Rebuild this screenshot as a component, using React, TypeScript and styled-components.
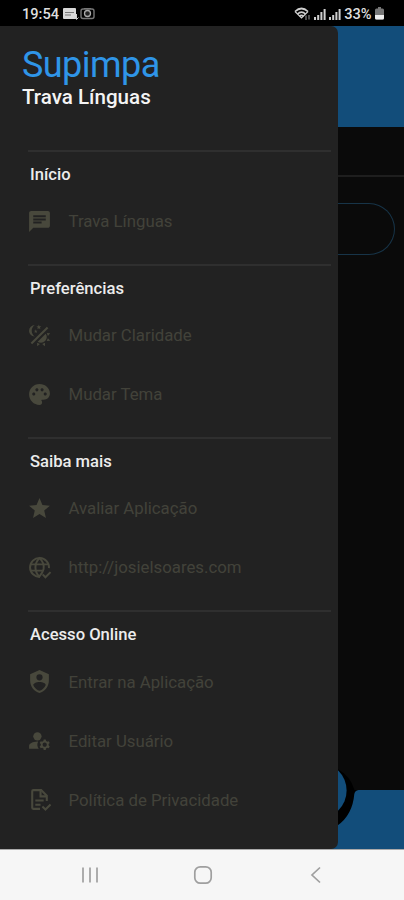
import React from 'react';
import styled, { createGlobalStyle } from 'styled-components';
import { MdChat, MdPalette, MdStar, MdManageAccounts } from 'react-icons/md';

const GlobalStyle = createGlobalStyle`
  * { box-sizing: border-box; }
  body { margin: 0; background: #000; font-family: Roboto, "Liberation Sans", sans-serif; }
`;

const Screen = styled.div`
  width: 404px;
  height: 900px;
  display: flex;
  flex-direction: column;
  overflow: hidden;
  background: #000;
`;

const StatusBar = styled.header`
  height: 26px;
  flex: none;
  display: flex;
  align-items: center;
  justify-content: space-between;
  padding: 1px 20.5px 0 22px;
  color: #dedede;
  font-size: 14.6px;
  font-weight: 500;
`;

const StatusGroup = styled.div<{ $gap: number }>`
  display: flex;
  align-items: center;
  gap: ${(p) => p.$gap}px;
  white-space: nowrap;
`;

const Body = styled.div`
  height: 823px;
  flex: none;
  display: flex;
  background: #0a0a0a;
`;

const Drawer = styled.nav`
  width: 337.5px;
  flex: none;
  height: 823px;
  background: #222;
  border-radius: 0 7px 7px 0;
  padding: 20px 7px 0 28px;
  position: relative;
  z-index: 1;
`;

const Brand = styled.div`
  height: 103.5px;
  margin-left: -6px;
`;

const Title = styled.h1`
  margin: 0;
  font-size: 36px;
  font-weight: 400;
  line-height: 38px;
  letter-spacing: -0.55px;
  color: #2f95e8;
`;

const Subtitle = styled.h2`
  margin: 0;
  font-size: 20.6px;
  font-weight: 500;
  line-height: 27px;
  color: #f4f4f4;
`;

const Section = styled.section`
  border-top: 2px solid #2f2f2f;
  padding-bottom: 13.2px;
`;

const SectionTitle = styled.h3`
  margin: 0 0 0 2px;
  height: 40px;
  padding-top: 6px;
  line-height: 34px;
  font-size: 16.6px;
  font-weight: 500;
  color: #ececec;
`;

const Item = styled.a`
  height: 59px;
  display: flex;
  align-items: center;
  gap: 17px;
  margin-left: -1.5px;
  color: #48483c;
  font-size: 16.8px;
  white-space: nowrap;

  svg { width: 25px; height: 25px; flex: none; fill: currentColor; }
`;

const Label = styled.span`
  color: #42423a;
`;

const Page = styled.main`
  flex: 1;
  margin-left: -10px;
  display: flex;
  flex-direction: column;
`;

const AppBar = styled.div`
  height: 101px;
  background: #124d7a;
`;

const Strip = styled.div`
  height: 50px;
  border-bottom: 2px solid #1e1e1e;
`;

const SearchField = styled.div`
  height: 52px;
  margin: 26px 9px 0 0;
  border: 1px solid #173448;
  border-left: 0;
  border-radius: 0 26px 26px 0;
`;

const BottomBar = styled.svg`
  display: block;
  margin-top: auto;
  width: 76.5px;
  height: 83px;
`;

const NavBar = styled.footer`
  flex: 1;
  background: #f6f6f6;
  border-top: 1px solid #aaa;
  display: grid;
  grid-template-columns: repeat(3, 113px);
  padding-left: 33px;
  align-items: center;
  justify-items: center;

  svg { fill: none; stroke: #9f9f9f; stroke-width: 1.7; }
`;

const FilledIcon = ({ d }: { d: string }) => (
  <svg viewBox="0 0 24 24"><path fillRule="evenodd" d={d} /></svg>
);

const themeIcon = 'M7.5,2C5.71,3.15 4.5,5.18 4.5,7.5C4.5,9.82 5.71,11.85 7.53,13C4.46,13 2,10.54 2,7.5A5.5,5.5 0 0,1 7.5,2M19.07,3.5L20.5,4.93L4.93,20.5L3.5,19.07L19.07,3.5M12.89,5.93L11.41,5L9.97,6L10.39,4.3L9,3.24L10.75,3.12L11.33,1.47L12,3.1L13.73,3.13L12.38,4.26L12.89,5.93M9.59,9.54L8.43,8.81L7.31,9.59L7.65,8.27L6.56,7.44L7.92,7.35L8.37,6.06L8.88,7.33L10.24,7.36L9.19,8.23L9.59,9.54M19,13.5A5.5,5.5 0 0,1 13.5,19C12.28,19 11.15,18.6 10.24,17.93L17.93,10.24C18.6,11.15 19,12.28 19,13.5M14.6,20.08L17.37,18.93L17.13,22.28L14.6,20.08M18.93,17.38L20.08,14.61L22.28,17.15L18.93,17.38M20.08,12.42L18.94,9.64L22.28,9.88L20.08,12.42M9.63,18.93L12.4,20.08L9.87,22.27L9.63,18.93Z';
const shieldIcon = 'M12,1L3,5V11C3,16.55 6.84,21.74 12,23C17.16,21.74 21,16.55 21,11V5L12,1M12,5A3,3 0 0,1 15,8A3,3 0 0,1 12,11A3,3 0 0,1 9,8A3,3 0 0,1 12,5M17.13,17C15.92,18.85 14.11,20.24 12,20.92C9.89,20.24 8.08,18.85 6.87,17C6.53,16.5 6.24,16 6,15.47C6,13.82 8.71,12.47 12,12.47C15.29,12.47 18,13.79 18,15.47C17.76,16 17.47,16.5 17.13,17Z';

const WebCheck = () => (
  <svg viewBox="0 0 24 24">
    <g fill="none" stroke="currentColor" strokeWidth="1.9">
      <path d="M12.5 21A9.1 9.1 0 1 1 21.1 12.6" />
      <path d="M12 21C6.8 16 6.8 8 12 3C15.2 6 16.6 9.5 15.9 13.4Q15 17 12 20.5" />
      <path d="M3.6 9H20.4M3.6 15H14.5" />
      <path d="M15 18.6L17.7 21.4L22.6 16.4" />
    </g>
  </svg>
);

const DocumentCheck = () => (
  <svg viewBox="0 0 24 24">
    <g fill="none" stroke="currentColor" strokeWidth="2">
      <path d="M12.5 21H6Q5 21 5 20V4Q5 3 6 3H13.6L19 8.4V13.5" />
      <path d="M13 3V9H19M8 13H16M8 17H13" />
      <path d="M14.8 18.8L17.7 21.6L22.6 16.8" />
    </g>
  </svg>
);

const Signal = () => (
  <svg width="12" height="12" viewBox="0 0 12 12" fill="#cfcfcf">
    <path d="M0 9h2v3H0zM3.2 7h2v5h-2zM6.4 4h2v8h-2zM9.6 1h2v11h-2z" />
  </svg>
);

type Entry = { icon: React.ReactNode; label: string };
type Group = { title: string; items: Entry[] };

const groups: Group[] = [
  { title: 'Início', items: [{ icon: <MdChat />, label: 'Trava Línguas' }] },
  {
    title: 'Preferências',
    items: [
      { icon: <FilledIcon d={themeIcon} />, label: 'Mudar Claridade' },
      { icon: <MdPalette />, label: 'Mudar Tema' },
    ],
  },
  {
    title: 'Saiba mais',
    items: [
      { icon: <MdStar />, label: 'Avaliar Aplicação' },
      { icon: <WebCheck />, label: 'http://josielsoares.com' },
    ],
  },
  {
    title: 'Acesso Online',
    items: [
      { icon: <FilledIcon d={shieldIcon} />, label: 'Entrar na Aplicação' },
      { icon: <MdManageAccounts />, label: 'Editar Usuário' },
      { icon: <DocumentCheck />, label: 'Política de Privacidade' },
    ],
  },
];

export default function App() {
  return (
    <>
      <GlobalStyle />
      <Screen>
        <StatusBar>
          <StatusGroup $gap={3}>
            <span>19:54</span>
            <svg width="34" height="13" viewBox="0 0 34 13">
              <rect x="1" y="1" width="13" height="11" rx="1" fill="#d8d8d8" />
              <path d="M3 5.5h9M3 8h6" stroke="#777" strokeWidth="1" />
              <path d="M14.5 7v5M12.5 10.5l2 2 2-2" stroke="#ccc" fill="none" />
              <rect x="19" y="2" width="13" height="9.5" rx="2" fill="none" stroke="#777" strokeWidth="1.4" />
              <circle cx="25.5" cy="6.5" r="3" fill="#222" stroke="#aaa" strokeWidth="1.3" />
              <path d="M22 1.5h7" stroke="#777" />
            </svg>
          </StatusGroup>
          <StatusGroup $gap={3}>
            <svg width="17" height="14" viewBox="0 0 17 14" fill="none" stroke="#cfcfcf" strokeWidth="1.7">
              <path d="M1 4.5Q7.5-1.5 14 4.5M3.5 7Q7.5 3.3 11.5 7M5.5 9.3Q7.5 7.5 9.5 9.3" />
              <path d="M1 4.5L7.5 11L14 4.5" strokeWidth="1.2" />
              <path d="M12 8.5v4.5M15 8v4.5" stroke="#777" strokeWidth="1.3" />
            </svg>
            <Signal />
            <Signal />
            <span>33%</span>
            <svg width="9" height="13" viewBox="0 0 9 13">
              <path d="M3 0h3v2H3z" fill="#777" />
              <rect x="0" y="1.5" width="9" height="11" rx="1.5" fill="#777" />
              <path d="M0 8h9v3a1.5 1.5 0 0 1-1.5 1.5h-6A1.5 1.5 0 0 1 0 11z" fill="#eee" />
            </svg>
          </StatusGroup>
        </StatusBar>

        <Body>
          <Drawer>
            <Brand>
              <Title>Supimpa</Title>
              <Subtitle>Trava Línguas</Subtitle>
            </Brand>
            {groups.map((g) => (
              <Section key={g.title}>
                <SectionTitle>{g.title}</SectionTitle>
                {g.items.map((it) => (
                  <Item key={it.label}>
                    {it.icon}
                    <Label>{it.label}</Label>
                  </Item>
                ))}
              </Section>
            ))}
          </Drawer>
          <Page>
            <AppBar />
            <Strip />
            <SearchField />
            <BottomBar viewBox="327.5 766 76.5 83">
              <path d="M327 849V790H353.8Q354 790 359 790H404V849Z" fill="#124d7a" />
              <path d="M327 765L337 769Q350 776 354 790H358Q354.5 790.5 353.8 794Q352 815 337 825.5L327 831Z" fill="#000" />
              <circle cx="318.3" cy="790.5" r="27.8" fill="#124d7a" />
            </BottomBar>
          </Page>
        </Body>

        <NavBar>
          <svg width="18" height="18" viewBox="0 0 18 18"><path d="M2 1.5v15M9 1.5v15M16 1.5v15" /></svg>
          <svg width="20" height="20" viewBox="0 0 20 20"><rect x="1.8" y="1.8" width="16.4" height="16.4" rx="5.5" /></svg>
          <svg width="18" height="18" viewBox="0 0 18 18"><path d="M13 1.5L5 9l8 7.5" /></svg>
        </NavBar>
      </Screen>
    </>
  );
}
